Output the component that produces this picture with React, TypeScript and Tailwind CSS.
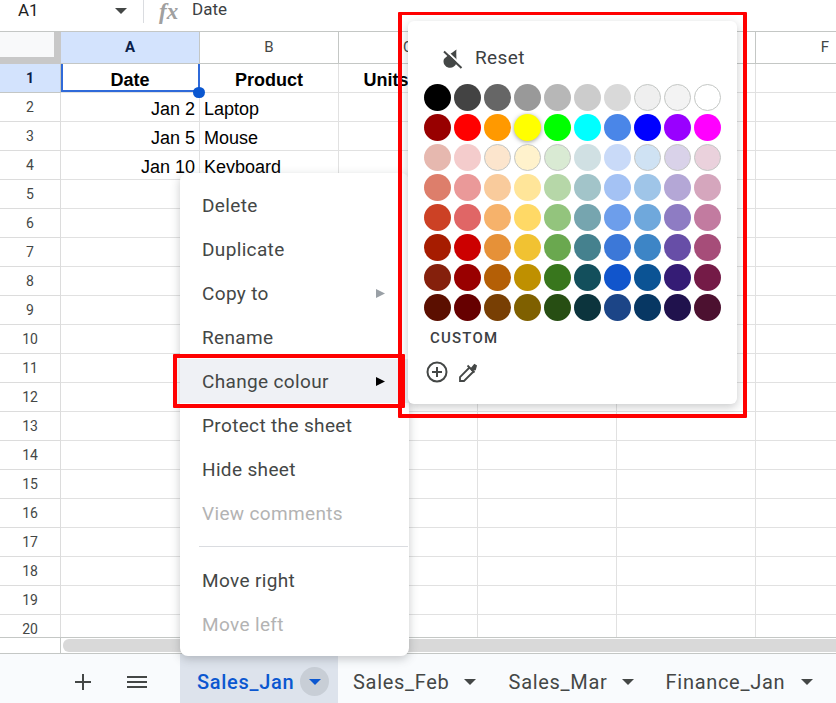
const colWidths = [139, 139, 139, 139, 139, 139];
const rows = Array.from({ length: 20 }, (_, i) => i + 1);

const swatches = [
  ["#000000", "#434343", "#666666", "#999999", "#b7b7b7", "#cccccc", "#d9d9d9", "#efefef", "#f3f3f3", "#ffffff"],
  ["#980000", "#ff0000", "#ff9900", "#ffff00", "#00ff00", "#00ffff", "#4a86e8", "#0000ff", "#9900ff", "#ff00ff"],
  ["#e6b8af", "#f4cccc", "#fce5cd", "#fff2cc", "#d9ead3", "#d0e0e3", "#c9daf8", "#cfe2f3", "#d9d2e9", "#ead1dc"],
  ["#dd7e6b", "#ea9999", "#f9cb9c", "#ffe599", "#b6d7a8", "#a2c4c9", "#a4c2f4", "#9fc5e8", "#b4a7d6", "#d5a6bd"],
  ["#cc4125", "#e06666", "#f6b26b", "#ffd966", "#93c47d", "#76a5af", "#6d9eeb", "#6fa8dc", "#8e7cc3", "#c27ba0"],
  ["#a61c00", "#cc0000", "#e69138", "#f1c232", "#6aa84f", "#45818e", "#3c78d8", "#3d85c6", "#674ea7", "#a64d79"],
  ["#85200c", "#990000", "#b45f06", "#bf9000", "#38761d", "#134f5c", "#1155cc", "#0b5394", "#351c75", "#741b47"],
  ["#5b0f00", "#660000", "#783f04", "#7f6000", "#274e13", "#0c343d", "#1c4587", "#073763", "#20124d", "#4c1130"],
];

const outlined = new Set(["#efefef", "#f3f3f3", "#ffffff", "#fce5cd", "#fff2cc", "#d9ead3", "#cfe2f3", "#d9d2e9", "#ead1dc"]);

function Caret({ color = "#444746" }: { color?: string }) {
  return (
    <svg width="12" height="6" viewBox="0 0 12 6" className="shrink-0">
      <path d="M0 0h12L6 6z" fill={color} />
    </svg>
  );
}

function FormulaBar() {
  return (
    <div className="h-[31px] flex items-start bg-white">
      <span className="w-[115px] pl-[18px] text-[17px] leading-[20px] text-[#1f1f1f] font-['Roboto',sans-serif]">A1</span>
      <div className="w-[28px] pt-[8px]">
        <Caret />
      </div>
      <div className="w-px h-[23px] bg-[#dadce0]" />
      <span className="ml-[15px] w-[33px] text-[23px] leading-[24px] italic font-bold text-[#a0a0a0] font-['Liberation_Serif',serif]">fx</span>
      <span className="text-[17px] leading-[19px] text-[#3c4043] font-['Roboto',sans-serif]">Date</span>
    </div>
  );
}

function Grid() {
  return (
    <div className="h-[606px] overflow-hidden bg-white font-['Liberation_Sans',sans-serif]">
      <div className="flex h-[33px] border-t border-[#c4c7c5]">
        <div className="w-[61px] shrink-0 bg-[#c8c8c8]">
          <div className="w-[54px] h-[25px] bg-[#f8f9fa]" />
        </div>
        {["A", "B", "C", "D", "E", "F"].map((c, i) => (
          <div
            key={c}
            style={{ width: colWidths[i] }}
            className={`shrink-0 flex items-center justify-center border-r border-b border-[#c4c7c5] text-[15px] font-['Roboto',sans-serif] ${
              i === 0 ? "bg-[#d3e3fd] font-bold text-[#0b1f4a]" : "bg-white text-[#444746]"
            }`}
          >
            {c}
          </div>
        ))}
      </div>
      {rows.map((r) => (
        <div key={r} className="flex h-[29px]">
          <div
            className={`w-[61px] shrink-0 flex items-center justify-center border-r border-b font-['Roboto',sans-serif] text-[14px] ${
              r === 1 ? "bg-[#d3e3fd] font-bold text-[#0b1f4a] border-[#c4c7c5]" : "bg-white text-[#444746] border-[#dcdcdc]"
            }`}
          >
            {r}
          </div>
          {colWidths.map((w, i) => (
            <div
              key={i}
              style={{ width: w }}
              className="shrink-0 border-r border-b border-[#e1e1e1] text-[18px] leading-[32px] text-black px-[4px] whitespace-nowrap overflow-hidden"
            >
              {r === 1 && i === 0 && <div className="text-center font-bold">Date</div>}
              {r === 1 && i === 1 && <div className="text-center font-bold">Product</div>}
              {r === 1 && i === 2 && <div className="text-center font-bold">Units Sold</div>}
              {r === 2 && i === 0 && <div className="text-right">Jan 2</div>}
              {r === 3 && i === 0 && <div className="text-right">Jan 5</div>}
              {r === 4 && i === 0 && <div className="text-right">Jan 10</div>}
              {r === 2 && i === 1 && "Laptop"}
              {r === 3 && i === 1 && "Mouse"}
              {r === 4 && i === 1 && "Keyboard"}
            </div>
          ))}
        </div>
      ))}
    </div>
  );
}

function Scrollbar() {
  return (
    <div className="h-[17px] flex bg-white border-t border-b border-[#c4c7c5]">
      <div className="w-[61px] shrink-0 border-r border-[#c4c7c5]" />
      <div className="flex-1 bg-white pt-px pl-[2px]">
        <div className="h-[13px] bg-[#d9d9d9] rounded-l-[6px]" />
      </div>
    </div>
  );
}

function TabBar() {
  return (
    <div className="h-[50px] flex items-stretch bg-[#f9fbfd] font-['Roboto',sans-serif] text-[20px] tracking-[0.7px] text-[#444746]">
      <div className="w-[180px] shrink-0 flex items-center pt-[5px]">
        <span className="ml-[75px] w-[16px] h-[16px] relative">
          <span className="absolute left-0 top-[7px] w-[16px] h-[2px] bg-[#444746]" />
          <span className="absolute left-[7px] top-0 w-[2px] h-[16px] bg-[#444746]" />
        </span>
        <span className="ml-[36px] w-[20px] flex flex-col gap-[3px]">
          <span className="h-[2px] bg-[#444746]" />
          <span className="h-[2px] bg-[#444746]" />
          <span className="h-[2px] bg-[#444746]" />
        </span>
      </div>
      <div className="w-[158px] shrink-0 flex items-center pt-[5px] pl-[17px] bg-[#dde3ec] text-[#0b57d0] font-medium">
        Sales_Jan
        <span className="ml-[6px] w-[29px] h-[29px] rounded-full bg-[#c8ced6] flex items-center justify-center">
          <Caret color="#0b57d0" />
        </span>
      </div>
      <div className="flex items-center pt-[5px] pl-[15px] gap-[14px]">
        <span>Sales_Feb</span>
        <Caret />
      </div>
      <div className="flex items-center pt-[5px] pl-[33px] gap-[14px]">
        <span>Sales_Mar</span>
        <Caret />
      </div>
      <div className="flex items-center pt-[5px] pl-[32px] gap-[16px] whitespace-nowrap">
        <span>Finance_Jan</span>
        <Caret />
      </div>
    </div>
  );
}

function MenuItem({ label, disabled, active, arrow }: { label: string; disabled?: boolean; active?: boolean; arrow?: string }) {
  return (
    <div
      className={`h-[44px] flex items-center justify-between pl-[22px] pr-[24px] ${active ? "bg-[#eff1f5]" : ""} ${
        disabled ? "text-[#b3b3b3]" : "text-[#444746]"
      }`}
    >
      <span className="mt-[2px]">{label}</span>
      {arrow && (
        <svg width="9" height="9" viewBox="0 0 9 9">
          <path d="M0 0l9 4.5-9 4.5z" fill={arrow} />
        </svg>
      )}
    </div>
  );
}

function ContextMenu() {
  return (
    <div className="absolute left-[180px] top-[173px] w-[229px] py-[10px] bg-white rounded-[8px] shadow-[0_3px_10px_rgba(60,64,67,0.28)] text-[19px] tracking-[0.35px] font-['Roboto',sans-serif]">
      <MenuItem label="Delete" />
      <MenuItem label="Duplicate" />
      <MenuItem label="Copy to" arrow="#9aa0a6" />
      <MenuItem label="Rename" />
      <MenuItem label="Change colour" active arrow="#000000" />
      <MenuItem label="Protect the sheet" />
      <MenuItem label="Hide sheet" />
      <MenuItem label="View comments" disabled />
      <div className="h-[23px] flex items-center pl-[19px] pr-px">
        <div className="h-px w-full bg-[#dadce0]" />
      </div>
      <MenuItem label="Move right" />
      <MenuItem label="Move left" disabled />
    </div>
  );
}

function ColorPicker() {
  return (
    <div className="absolute left-[408px] top-[21px] w-[329px] h-[383px] px-[16px] bg-white rounded-[6px] shadow-[0_3px_10px_rgba(60,64,67,0.28)] font-['Roboto',sans-serif]">
      <div className="h-[63px] flex items-center pt-[11px] pl-[19px] gap-[12px] text-[19px] tracking-[0.4px] text-[#3c4043]">
        <svg width="20" height="21" viewBox="0 0 20 21" className="shrink-0">
          <path d="M13.5 1.5C13 5 13.5 8 13.5 14A6.5 6.5 0 1 1 .8 11.5C2 9 9 5 13.5 1.5z" fill="#444746" />
          <path d="M2.6 2.2 20 18.8" stroke="#ffffff" strokeWidth="2" />
          <path d="M1 3.5 18.5 20" stroke="#444746" strokeWidth="2" />
        </svg>
        Reset
      </div>
      <div className="grid grid-cols-[repeat(10,27px)] gap-[3px]">
        {swatches.flat().map((c, i) => (
          <div
            key={i}
            style={{ backgroundColor: c }}
            className={`w-[27px] h-[27px] rounded-full ${outlined.has(c) ? "border border-[#c4c7c5]" : ""} ${
              c === "#ffff00" ? "shadow-[0_1px_4px_rgba(60,64,67,0.5)]" : ""
            }`}
          />
        ))}
      </div>
      <div className="mt-[9px] pl-[6px] text-[15px] leading-[16px] font-medium tracking-[1.2px] text-[#3c4043]">CUSTOM</div>
      <div className="mt-[15px] flex items-center gap-[9px] pl-[2px]">
        <svg width="22" height="22" viewBox="0 0 22 22" fill="none" stroke="#444746" strokeWidth="2">
          <circle cx="11" cy="11" r="9.5" />
          <path d="M11 6v10M6 11h10" />
        </svg>
        <svg width="22" height="22" viewBox="0 0 22 22" fill="none" stroke="#444746" strokeWidth="1.8">
          <path d="M12.5 6.5 3 16v4h4l9.5-9.5" />
          <path d="M10.5 4.5l7 7" />
          <path d="M14.5 7.5l3-3.5 1.5 1-1 3.5-3 .5z" fill="#444746" />
        </svg>
      </div>
    </div>
  );
}

export default function App() {
  return (
    <div className="relative w-[836px] h-[703px] overflow-hidden bg-white">
      <FormulaBar />
      <Grid />
      <Scrollbar />
      <TabBar />
      {/* selection border on A1 */}
      <div className="absolute left-[61px] top-[64px] w-[139px] h-[28px] border-l-2 border-r-2 border-b-2 border-[#2f6ad9]" />
      <div className="absolute left-[193px] top-[87px] w-[12px] h-[11px] rounded-full bg-[#0b57d0]" />
      <ContextMenu />
      <ColorPicker />
      {/* red callouts */}
      <div className="absolute left-[398px] top-[12px] w-[349px] h-[406px] border-[4px] border-t-[3px] border-[#ff0000] rounded-[1px]" />
      <div className="absolute left-[173px] top-[354px] w-[232px] h-[54px] border-[4px] border-[#ff0000] rounded-[1px]" />
    </div>
  );
}
